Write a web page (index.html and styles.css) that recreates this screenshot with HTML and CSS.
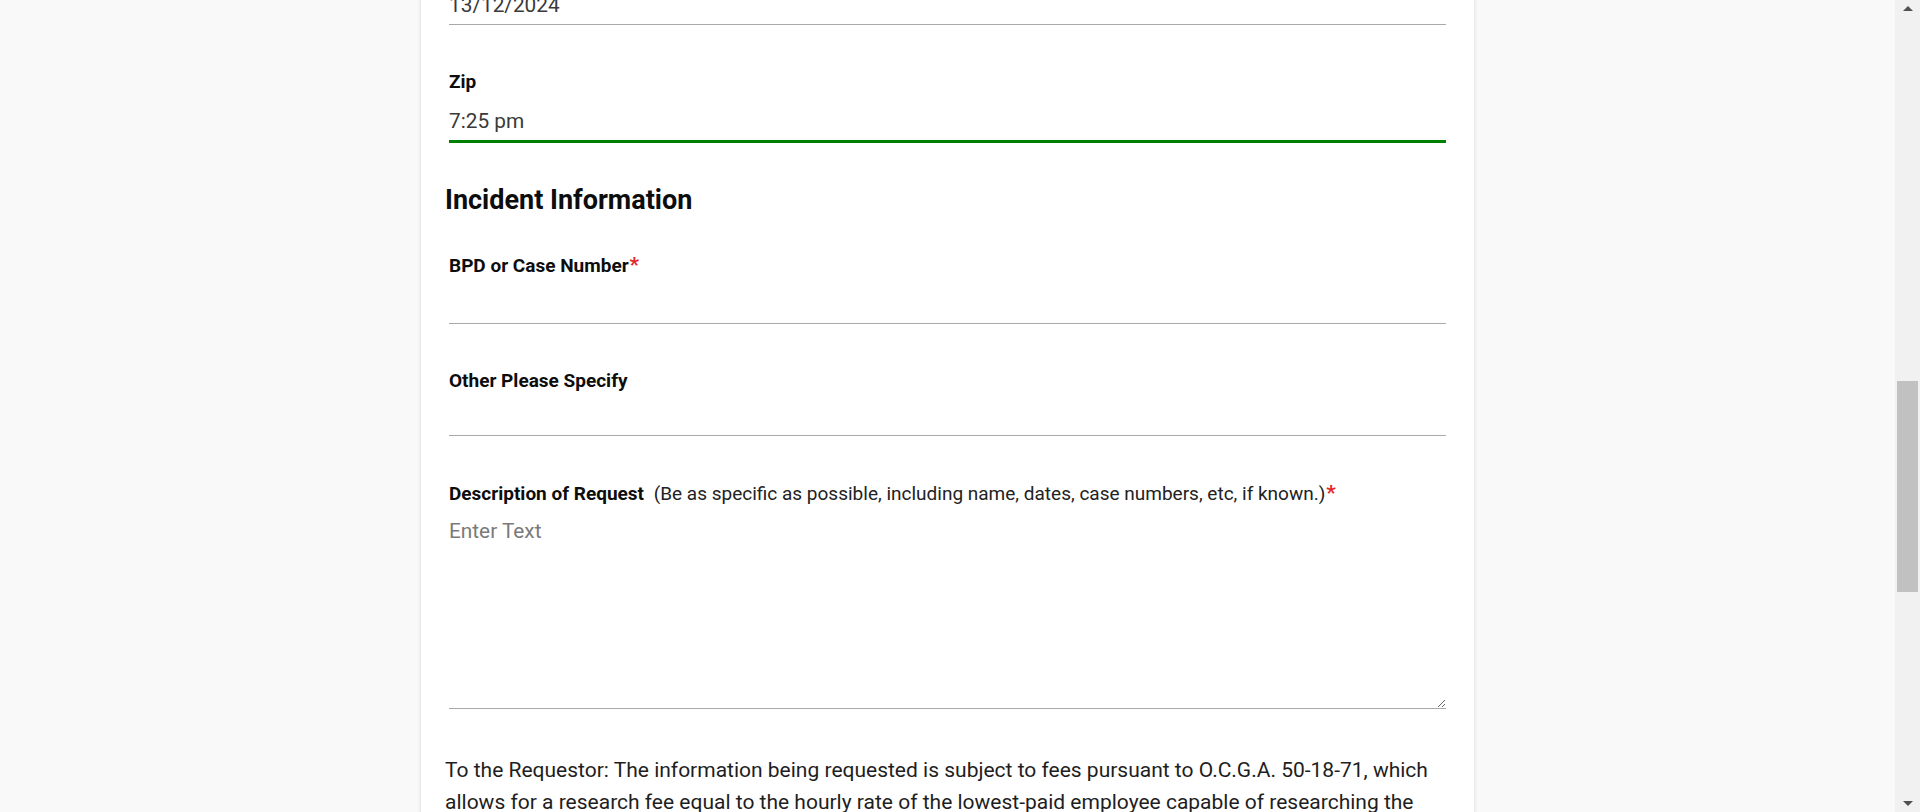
FILE: index.html
```html
<!DOCTYPE html>
<html lang="en">
<head>
<meta charset="utf-8">
<title>Open Records Request</title>
<link rel="stylesheet" href="styles.css">
</head>
<body>
<main class="viewport">
  <form class="card">
    <div class="field field--first">
      <input class="input" type="text" value="13/12/2024">
    </div>
    <div class="field">
      <label class="label">Zip</label>
      <input class="input input--active" type="text" value="7:25 pm">
    </div>
    <h2 class="section-title">Incident Information</h2>
    <div class="field">
      <label class="label">BPD or Case Number<span class="req">*</span></label>
      <input class="input input--req" type="text">
    </div>
    <div class="field">
      <label class="label">Other Please Specify</label>
      <input class="input input--compact" type="text">
    </div>
    <div class="field">
      <label class="label">Description of Request <span class="hint">(Be as specific as possible, including name, dates, case numbers, etc, if known.)</span><span class="req">*</span></label>
      <textarea class="textarea" placeholder="Enter Text"></textarea>
    </div>
    <p class="notice">To the Requestor: The information being requested is subject to fees pursuant to O.C.G.A. 50-18-71, which allows for a research fee equal to the hourly rate of the lowest-paid employee capable of researching the request, retrieving and copying the records, and redacting information exempt from disclosure.</p>
  </form>
</main>
<div class="scrollbar">
  <div class="sb-btn"><span class="arrow arrow--up"></span></div>
  <div class="sb-track"><div class="sb-thumb" style="margin-top:364px;height:211px"></div></div>
  <div class="sb-btn"><span class="arrow arrow--down"></span></div>
</div>
</body>
</html>
```
FILE: styles.css
```css
html, body {
  margin: 0;
  height: 100%;
}
body {
  display: flex;
  overflow: hidden;
  background: #f9f9f9;
  font-family: "Roboto", "Liberation Sans", sans-serif;
  color: #111;
}
.viewport {
  flex: 1;
  overflow: hidden;
}
.card {
  width: 1053px;
  box-sizing: border-box;
  margin: -14px auto 0;
  padding: 0 24px 40px;
  background: #fff;
  box-shadow: 0 0 4px rgba(0, 0, 0, 0.14);
}
.field {
  margin: 0 4px 45px;
}
.label {
  display: block;
  font-size: 19px;
  font-weight: 700;
  line-height: 24px;
  color: #0d0d0d;
  white-space: nowrap;
}
.req {
  color: #e3262a;
  font-size: 21px;
  margin-left: 1px;
}
.hint {
  font-weight: 400;
  font-size: 19px;
  color: #222;
  margin-left: 5px;
}
.input {
  display: block;
  width: 100%;
  box-sizing: border-box;
  margin: 8px 0 0;
  height: 39px;
  padding: 6px 0;
  border: 0;
  border-bottom: 1px solid #a9a9a9;
  font-family: inherit;
  font-size: 20.8px;
  line-height: 26px;
  color: #3a3a3a;
  background: transparent;
  outline: none;
}
.field--first .input {
  margin-top: 0;
}
.input--active {
  height: 41px;
  border-bottom: 3px solid #008000;
}
.input--req {
  height: 38px;
  padding-bottom: 5px;
}
.input--compact {
  height: 35px;
  padding-bottom: 2px;
}
.textarea {
  display: block;
  width: 100%;
  box-sizing: border-box;
  margin: 7px 0 0;
  height: 196px;
  padding: 5px 0 6px;
  border: 0;
  border-bottom: 1px solid #a9a9a9;
  font-family: inherit;
  font-size: 20.8px;
  line-height: 26px;
  color: #3a3a3a;
  background: transparent;
  outline: none;
  resize: vertical;
}
.textarea::placeholder {
  color: #7a7a7a;
}
.section-title {
  margin: -5px 0 36px;
  font-size: 27px;
  line-height: 34px;
  font-weight: 700;
  color: #0d0d0d;
}
.notice {
  margin: 1px 0 0;
  font-size: 21px;
  line-height: 32px;
  color: #1e1e1e;
}
.scrollbar {
  width: 25px;
  flex: none;
  display: flex;
  flex-direction: column;
  background: #f1f1f1;
}
.sb-btn {
  height: 17px;
  display: flex;
  align-items: center;
  justify-content: center;
}
.sb-track {
  flex: 1;
  display: flex;
  flex-direction: column;
  align-items: center;
}
.sb-thumb {
  width: 21px;
  background: #c1c1c1;
}
.arrow {
  width: 0;
  height: 0;
  border-left: 5.5px solid transparent;
  border-right: 5.5px solid transparent;
}
.arrow--up {
  border-bottom: 5px solid #505050;
}
.arrow--down {
  border-top: 5px solid #505050;
}
```
